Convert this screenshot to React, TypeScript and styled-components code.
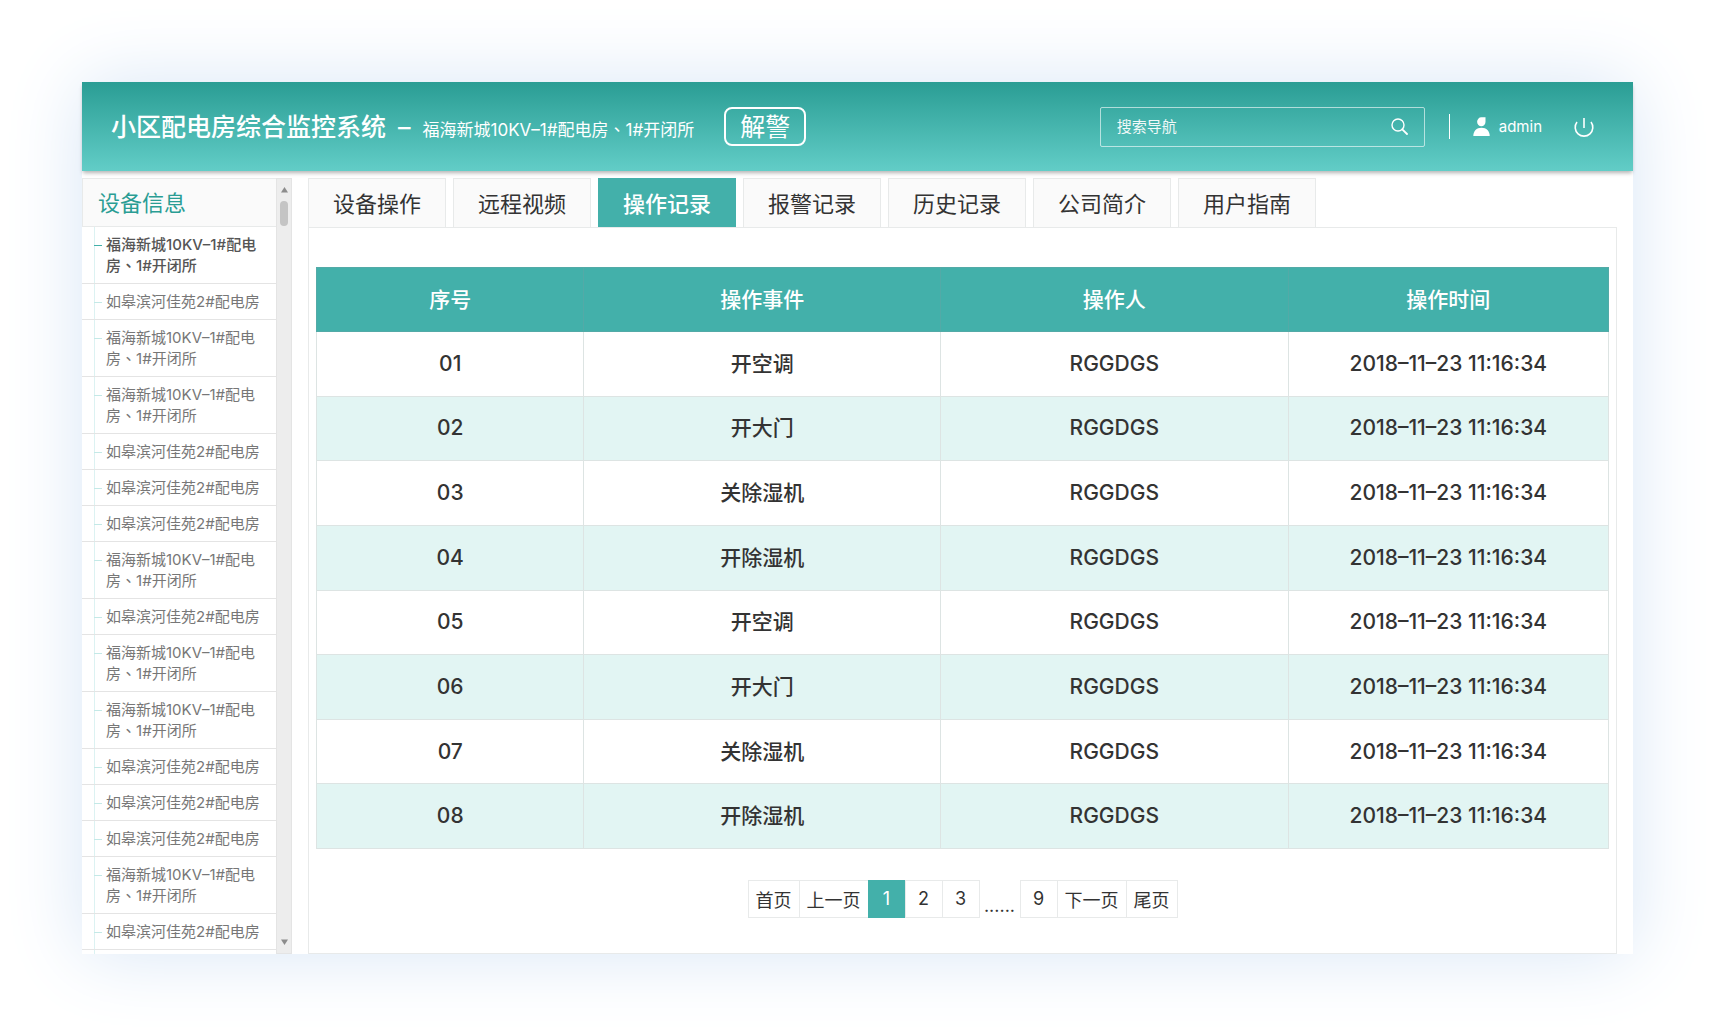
import React from 'react';
import styled, { createGlobalStyle, css } from 'styled-components';

const teal = '#43b0aa';
const line = '#e8eaea';

const GlobalStyle = createGlobalStyle`
  *, *::before, *::after { box-sizing: border-box; }
  body {
    margin: 0;
    background: #fff;
    color: #333;
    font-family: Inter, "Noto Sans CJK SC", sans-serif;
  }
  button, input { font: inherit; color: inherit; }
`;

const Page = styled.div`
  padding: 82px;
`;

const Frame = styled.div`
  display: flex;
  flex-direction: column;
  min-height: calc(100vh - 164px);
  background: #fff;
  box-shadow: 0 0 72px #d8e6f6;
`;

const Header = styled.header`
  display: flex;
  align-items: center;
  height: 89px;
  padding: 0 39px 0 29px;
  color: #fff;
  background: linear-gradient(#2a9d94, #62cdc7);
  box-shadow: 0 3px 4px -1px rgba(0, 0, 0, 0.3);
`;

const Heading = styled.div`
  display: flex;
  align-items: baseline;
  gap: 12px;
  padding-top: 3px;
`;

const Title = styled.h1`
  display: flex;
  gap: 12px;
  margin: 0;
  font-size: 25px;
  font-weight: 500;
  line-height: 38px;
`;

const Station = styled.span`
  font-size: 17px;
  line-height: 38px;
`;

/* The enumeration comma sits in the middle of its square. */
const Comma = styled.span`
  font-family: "Noto Sans CJK TC", sans-serif;
  line-height: 1;
`;

const ClearAlarm = styled.button`
  margin-left: 30px;
  width: 82px;
  height: 39px;
  padding: 0;
  border: 2px solid #fff;
  border-radius: 8px;
  background: none;
  font-size: 25px;
  line-height: 34px;
`;

const Tools = styled.div`
  display: flex;
  align-items: center;
  margin-left: auto;
`;

const Search = styled.form`
  display: flex;
  align-items: center;
  width: 325px;
  height: 40px;
  padding: 0 16px;
  border: 1px solid rgba(255, 255, 255, 0.6);
  border-radius: 2px;
`;

const SearchInput = styled.input`
  flex: 1;
  min-width: 0;
  padding: 0;
  border: 0;
  outline: 0;
  background: none;
  font-size: 15px;
  &::placeholder { color: #fff; opacity: 0.92; }
`;

const IconButton = styled.button`
  display: flex;
  padding: 0;
  border: 0;
  background: none;
`;

const User = styled.a`
  display: flex;
  align-items: center;
  gap: 9px;
  margin: 0 32px 0 24px;
  padding-left: 23px;
  color: #fff;
  font-size: 15px;
  line-height: 25px;
  text-decoration: none;
  border-left: 1px solid #fff;
`;

const Body = styled.div`
  display: flex;
  flex: 1;
  padding-top: 7px;
`;

const Sidebar = styled.aside`
  display: flex;
  flex: none;
  width: 210px;
`;

const SideMain = styled.div`
  display: flex;
  flex-direction: column;
  flex: 1;
`;

const SideTitle = styled.h2`
  margin: 0;
  height: 49px;
  padding-left: 15px;
  border: 1px solid ${line};
  border-right: 0;
  background: #fafafa;
  color: #2a9d94;
  font-size: 22px;
  font-weight: 400;
  line-height: 48px;
`;

const StationList = styled.ul`
  flex: 1;
  margin: 0;
  padding: 0;
  list-style: none;
  background: linear-gradient(#dcf2f2, #dcf2f2) 12px 0 / 1px 100% no-repeat;
`;

const StationItem = styled.li`
  border-bottom: 1px solid #e4e4e4;
`;

const StationLink = styled.a<{ $current: boolean }>`
  display: flex;
  gap: 4px;
  padding: 7px 8px 7px 12px;
  color: #777;
  font-size: 15px;
  line-height: 21px;
  text-decoration: none;
  &::before {
    content: "";
    flex: none;
    width: 8px;
    height: 1px;
    margin-top: 11px;
    background: #c4e9e7;
  }
  ${(p) => p.$current && css`
    color: #555;
    font-weight: 500;
    &::before { background: ${teal}; }
  `}
`;

const ScrollTrack = styled.div`
  display: flex;
  flex-direction: column;
  align-items: center;
  width: 16px;
  padding: 8px 0;
  border: 1px solid #e4e4e4;
  background: #ededed;
`;

const ScrollThumb = styled.div`
  width: 8px;
  height: 25px;
  margin: 8px 0 auto;
  border-radius: 4px;
  background: #c4c4c4;
`;

const Content = styled.main`
  display: flex;
  flex-direction: column;
  flex: 1;
  min-width: 0;
  padding: 0 16px;
`;

const Tabs = styled.nav`
  display: flex;
  gap: 7px;
`;

const Tab = styled.button<{ $active: boolean }>`
  width: 138px;
  height: 49px;
  padding: 0 0 2px;
  border: 1px solid ${(p) => (p.$active ? teal : line)};
  border-bottom: 0;
  background: ${(p) => (p.$active ? teal : '#fafafa')};
  color: ${(p) => (p.$active ? '#fff' : '#333')};
  font-size: 22px;
  font-weight: ${(p) => (p.$active ? 500 : 400)};
`;

const Panel = styled.section`
  flex: 1;
  padding: 39px 7px 34px;
  border: 1px solid ${line};
`;

const Records = styled.table`
  width: 100%;
  height: 582px;
  border-collapse: collapse;
  table-layout: fixed;
  font-size: 21px;
  font-weight: 500;
  line-height: 32px;
  text-align: center;
`;

const Column = styled.col<{ $share: number }>`
  width: ${(p) => p.$share}%;
`;

const HeadCell = styled.th`
  height: 64px;
  padding: 0;
  border: 1px solid #53aaa7;
  background: ${teal};
  color: #fff;
  font-weight: 500;
`;

const Row = styled.tr`
  &:nth-child(even) { background: #e2f5f3; }
`;

const Cell = styled.td`
  padding: 0;
  border: 1px solid #dde4e3;
`;

const Pager = styled.nav`
  display: flex;
  justify-content: center;
  margin-top: 31px;
  font-size: 18px;
`;

const PageButton = styled.button<{ $active?: boolean }>`
  min-width: 38px;
  height: 38px;
  padding: 0 7px 1px;
  border: 1px solid ${(p) => (p.$active ? teal : line)};
  background: ${(p) => (p.$active ? teal : '#fff')};
  color: ${(p) => (p.$active ? '#fff' : '#333')};
  & + & { margin-left: -1px; }
`;

const Dots = styled.span`
  align-self: flex-end;
  width: 40px;
  line-height: 24px;
  text-align: center;
`;

const SearchIcon = () => (
  <svg width="17" height="17" viewBox="0 0 17 17" fill="none" stroke="#fff" strokeWidth="1.4" strokeLinecap="round">
    <circle cx="7" cy="7" r="6" />
    <path d="M11.3 11.3 16 16" strokeWidth="1.8" />
  </svg>
);

const UserIcon = () => (
  <svg width="17" height="19" viewBox="0 0 17 19" fill="#fff">
    <path d="M8.300 0.300H12.500V4.700a4.200 4.500 0 1 1-4.200-4.400Z" />
    <path d="M0.300 19c0-5 3.200-8.300 8.200-8.300s8.200 3.300 8.200 8.300Z" />
  </svg>
);

const PowerIcon = () => (
  <svg width="20" height="20" viewBox="0 0 20 20" fill="none" stroke="#fff" strokeWidth="1.6">
    <path d="M10 1v10" />
    <path d="M3 5a8.800 8.800 0 1 0 14 0" />
  </svg>
);

const Arrow = ({ down }: { down?: boolean }) => (
  <svg width="7" height="6" viewBox="0 0 7 6" fill="#8c8c8c">
    <path d={down ? 'M0 0.500h7L3.500 6Z' : 'M0 5.500h7L3.500 0Z'} />
  </svg>
);

const LongName = () => (
  <span>福海新城10KV–1#配电房<Comma>、</Comma>1#开闭所</span>
);
const ShortName = () => <span>如皋滨河佳苑2#配电房</span>;

const stations = 'LSLLSSSLSLLSSSLS'.split('');
const tabs = ['设备操作', '远程视频', '操作记录', '报警记录', '历史记录', '公司简介', '用户指南'];
const columns = [
  { name: '序号', share: 20.7 },
  { name: '操作事件', share: 27.6 },
  { name: '操作人', share: 26.9 },
  { name: '操作时间', share: 24.8 },
];
const events = ['开空调', '开大门', '关除湿机', '开除湿机', '开空调', '开大门', '关除湿机', '开除湿机'];

export default function App() {
  return (
    <Page>
      <GlobalStyle />
      <Frame>
        <Header>
          <Heading>
            <Title>小区配电房综合监控系统<span>–</span></Title>
            <Station><LongName /></Station>
          </Heading>
          <ClearAlarm type="button">解警</ClearAlarm>
          <Tools>
            <Search role="search" onSubmit={(e) => e.preventDefault()}>
              <SearchInput type="text" placeholder="搜索导航" aria-label="搜索导航" />
              <IconButton type="submit" aria-label="搜索"><SearchIcon /></IconButton>
            </Search>
            <User href="#user"><UserIcon />admin</User>
            <IconButton type="button" aria-label="退出"><PowerIcon /></IconButton>
          </Tools>
        </Header>
        <Body>
          <Sidebar>
            <SideMain>
              <SideTitle>设备信息</SideTitle>
              <StationList>
                {stations.map((kind, i) => (
                  <StationItem key={i}>
                    <StationLink href={`#station-${i + 1}`} $current={i === 0}>
                      {kind === 'L' ? <LongName /> : <ShortName />}
                    </StationLink>
                  </StationItem>
                ))}
              </StationList>
            </SideMain>
            <ScrollTrack>
              <Arrow />
              <ScrollThumb />
              <Arrow down />
            </ScrollTrack>
          </Sidebar>
          <Content>
            <Tabs>
              {tabs.map((name) => (
                <Tab key={name} type="button" $active={name === '操作记录'}>{name}</Tab>
              ))}
            </Tabs>
            <Panel>
              <Records>
                <colgroup>
                  {columns.map((c) => <Column key={c.name} $share={c.share} />)}
                </colgroup>
                <thead>
                  <tr>{columns.map((c) => <HeadCell key={c.name} scope="col">{c.name}</HeadCell>)}</tr>
                </thead>
                <tbody>
                  {events.map((event, i) => (
                    <Row key={i}>
                      <Cell>{`0${i + 1}`}</Cell>
                      <Cell>{event}</Cell>
                      <Cell>RGGDGS</Cell>
                      <Cell>2018–11–23 11:16:34</Cell>
                    </Row>
                  ))}
                </tbody>
              </Records>
              <Pager aria-label="分页">
                <PageButton type="button">首页</PageButton>
                <PageButton type="button">上一页</PageButton>
                <PageButton type="button" $active>1</PageButton>
                <PageButton type="button">2</PageButton>
                <PageButton type="button">3</PageButton>
                <Dots>......</Dots>
                <PageButton type="button">9</PageButton>
                <PageButton type="button">下一页</PageButton>
                <PageButton type="button">尾页</PageButton>
              </Pager>
            </Panel>
          </Content>
        </Body>
      </Frame>
    </Page>
  );
}
